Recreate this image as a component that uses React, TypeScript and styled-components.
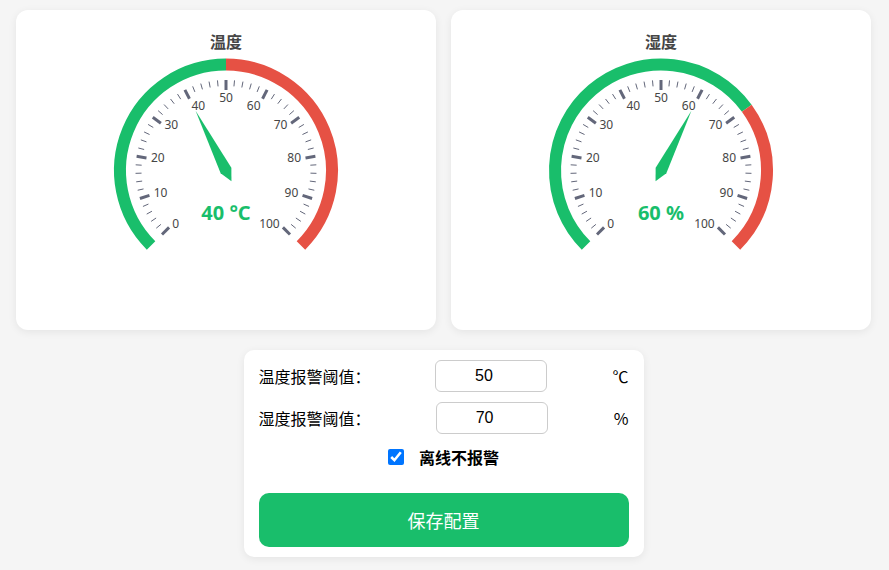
import React from 'react';
import styled, { createGlobalStyle } from 'styled-components';

const GREEN = '#19be6b';
const RED = '#e65144';
const TICK = '#63677a';
const LABEL = '#464646';

const Global = createGlobalStyle`
  html, body { margin: 0; padding: 0; background: #f5f5f5; }
  body { font-family: "Noto Sans", "Noto Sans CJK SC", sans-serif; }
`;

const Page = styled.div`
  padding: 10px 18px 13px 16px;
  display: flex;
  flex-direction: column;
  align-items: center;
  gap: 20px;
`;

const GaugeRow = styled.div`
  width: 100%;
  display: grid;
  grid-template-columns: 1fr 1fr;
  gap: 15px;
`;

const Card = styled.div`
  height: 320px;
  box-sizing: border-box;
  background: #fff;
  border-radius: 12px;
  box-shadow: 0 2px 8px rgba(0, 0, 0, 0.07);
  padding-top: 21px;
  display: flex;
  flex-direction: column;
  align-items: center;
`;

const GaugeTitle = styled.div`
  font-family: "Noto Sans CJK SC", sans-serif;
  font-size: 16px;
  line-height: 20px;
  font-weight: 700;
  color: ${LABEL};
`;

const GaugeSvg = styled.svg`
  display: block;
  width: 420px;
  height: 279px;
`;

const FormCard = styled.div`
  width: 400px;
  box-sizing: border-box;
  background: #fff;
  border-radius: 10px;
  box-shadow: 0 2px 8px rgba(0, 0, 0, 0.07);
  padding: 10px 15px;
  display: flex;
  flex-direction: column;
  gap: 10px;
`;

const FieldRow = styled.div`
  height: 32px;
  display: flex;
  align-items: center;
  justify-content: space-between;
`;

const FieldLabel = styled.label`
  width: 112px;
  font-family: "Noto Sans CJK SC", sans-serif;
  font-size: 16px;
  color: #000;
  white-space: nowrap;
`;

const NumberInput = styled.input`
  width: 112px;
  height: 32px;
  box-sizing: border-box;
  border: 1px solid #ccc;
  border-radius: 6px;
  text-align: center;
  font-family: "Liberation Sans", Arial, sans-serif;
  font-size: 16px;
  color: #000;
  background: #fff;
  outline: none;
  padding: 0 17px 0 2px;
`;

const Unit = styled.span`
  font-family: "Noto Sans CJK SC", sans-serif;
  font-size: 16px;
  color: #000;
`;

const CheckRow = styled.label`
  height: 26px;
  display: flex;
  align-items: center;
  justify-content: center;
  gap: 15px;
`;

const CheckBox = styled.input`
  width: 16px;
  height: 16px;
  margin: 0;
`;

const CheckText = styled.span`
  font-family: "Noto Sans CJK SC", sans-serif;
  font-size: 16px;
  font-weight: 700;
  color: #000;
`;

const SaveButton = styled.button`
  margin-top: 13px;
  height: 54px;
  border: none;
  border-radius: 10px;
  background: ${GREEN};
  color: #fff;
  font-family: "Noto Sans CJK SC", sans-serif;
  font-size: 18px;
  cursor: pointer;
`;

type GaugeProps = { title: string; value: number; unit: string; threshold: number };

const CX = 210;
const CY = 119.5;

const ang = (v: number) => ((225 - v * 2.7) * Math.PI) / 180;
const pt = (r: number, v: number): [number, number] => {
  const a = ang(v);
  return [CX + r * Math.cos(a), CY - r * Math.sin(a)];
};

const arc = (r: number, v1: number, v2: number) => {
  const [x1, y1] = pt(r, v1);
  const [x2, y2] = pt(r, v2);
  const large = (v2 - v1) * 2.7 > 180 ? 1 : 0;
  return `M${x1.toFixed(2)} ${y1.toFixed(2)} A${r} ${r} 0 ${large} 1 ${x2.toFixed(2)} ${y2.toFixed(2)}`;
};

const Gauge: React.FC<GaugeProps> = ({ title, value, unit, threshold }) => {
  const ticks = [] as React.ReactNode[];
  for (let i = 0; i <= 50; i++) {
    const v = i * 2;
    const major = i % 5 === 0;
    const [x1, y1] = pt(90.5, v);
    const [x2, y2] = pt(major ? 80.5 : 84.5, v);
    ticks.push(
      <line key={i} x1={x1} y1={y1} x2={x2} y2={y2} stroke={TICK} strokeWidth={major ? 3 : 1} />
    );
  }
  const labels = [] as React.ReactNode[];
  for (let v = 0; v <= 100; v += 10) {
    const a = ang(v);
    const ux = Math.cos(a);
    const uy = -Math.sin(a);
    const [x, y] = pt(76, v);
    const anchor = ux < -0.4 ? 'start' : ux > 0.4 ? 'end' : 'middle';
    const by = uy < -0.8 ? y + 7 : uy > 0.8 ? y - 1 : y + 3.5;
    labels.push(
      <text key={v} x={x} y={by} textAnchor={anchor} fontSize={12} fill={LABEL} fontFamily='"Noto Sans", sans-serif'>
        {v}
      </text>
    );
  }
  const a = ang(value);
  const dx = Math.cos(a);
  const dy = -Math.sin(a);
  const px = -dy;
  const py = dx;
  const w = 6;
  const len = 67;
  const color = value < threshold ? GREEN : RED;
  const pointer = [
    [CX - dx * w * 2, CY - dy * w * 2],
    [CX + px * w, CY + py * w],
    [CX + dx * len, CY + dy * len],
    [CX - px * w, CY - py * w],
  ]
    .map((p) => p.map((n) => n.toFixed(2)).join(','))
    .join(' ');

  return (
    <Card>
      <GaugeTitle>{title}</GaugeTitle>
      <GaugeSvg viewBox="0 0 420 279">
        <path d={arc(106, 0, threshold)} fill="none" stroke={GREEN} strokeWidth={12} />
        <path d={arc(106, threshold, 100)} fill="none" stroke={RED} strokeWidth={12} />
        {ticks}
        {labels}
        <polygon points={pointer} fill={color} />
        <text
          x={CX}
          y={CY + 49}
          textAnchor="middle"
          fontSize={20}
          fontWeight={700}
          fill={color}
          fontFamily='"Noto Sans", sans-serif'
        >
          {value} {unit}
        </text>
      </GaugeSvg>
    </Card>
  );
};

export default function App() {
  return (
    <Page>
      <Global />
      <GaugeRow>
        <Gauge title="温度" value={40} unit="°C" threshold={50} />
        <Gauge title="湿度" value={60} unit="%" threshold={70} />
      </GaugeRow>
      <FormCard>
        <FieldRow>
          <FieldLabel>温度报警阈值：</FieldLabel>
          <NumberInput type="text" defaultValue="50" />
          <Unit>℃</Unit>
        </FieldRow>
        <FieldRow>
          <FieldLabel>湿度报警阈值：</FieldLabel>
          <NumberInput type="text" defaultValue="70" />
          <Unit>%</Unit>
        </FieldRow>
        <CheckRow>
          <CheckBox type="checkbox" defaultChecked />
          <CheckText>离线不报警</CheckText>
        </CheckRow>
        <SaveButton type="button">保存配置</SaveButton>
      </FormCard>
    </Page>
  );
}
